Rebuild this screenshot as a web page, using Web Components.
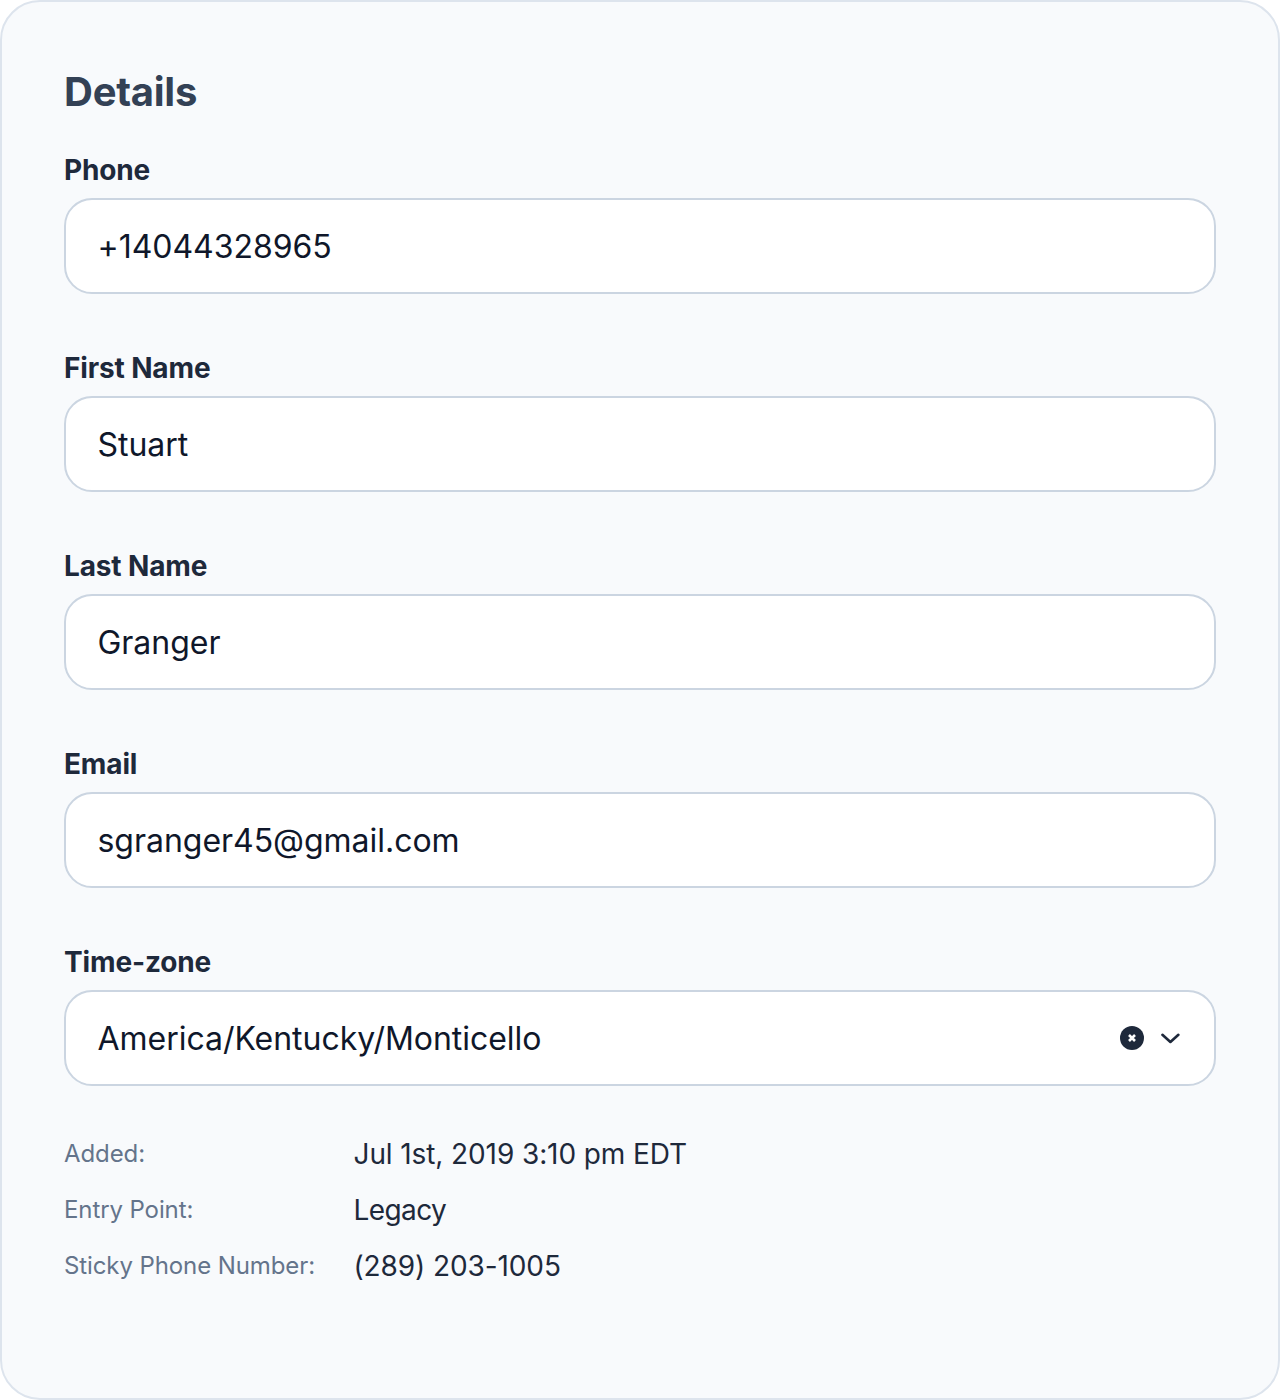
<!DOCTYPE html>
<html lang="en"><head><meta charset="utf-8"><title>Details</title>
<style>html,body{margin:0;background:#fff}body{font-family:Inter,"Liberation Sans",sans-serif}</style></head>
<body>
<details-card heading="Details">
<text-field label="Phone">+14044328965</text-field>
<text-field label="First Name">Stuart</text-field>
<text-field label="Last Name">Granger</text-field>
<text-field label="Email">sgranger45@gmail.com</text-field>
<text-field label="Time-zone">America/Kentucky/Monticello<select-controls slot="controls"></select-controls></text-field>
<meta-list slot="meta">
<meta-row label="Added:">Jul 1st, 2019 3:10 pm EDT</meta-row>
<meta-row label="Entry Point:" style="letter-spacing:-.6px">Legacy</meta-row>
<meta-row label="Sticky Phone Number:">(289) 203-1005</meta-row>
</meta-list>
</details-card>
<script>
const define=(name,html,attr)=>customElements.define(name,class extends HTMLElement{
connectedCallback(){
if(this.shadowRoot)return;
const root=this.attachShadow({mode:"open"});
root.innerHTML=html;
if(attr)root.querySelector(".label").textContent=this.getAttribute(attr);
}});
define("details-card",`<style>
:host{display:block;box-sizing:border-box;height:1400px;padding:62px;border:2px solid #dde4ed;border-radius:40px;background:#f8fafc}
h2{margin:0 0 38px;padding-top:8px;font-size:40px;line-height:40px;font-weight:700;letter-spacing:-.25px;color:#334155}
.fields{display:flex;flex-direction:column;gap:54px}
.meta{margin-top:48px}
</style><h2 class="label"></h2><div class="fields"><slot></slot></div><div class="meta"><slot name="meta"></slot></div>`,"heading");
define("text-field",`<style>
:host{display:block}
.label{font-size:28px;line-height:40px;height:40px;font-weight:700;letter-spacing:-.14px;color:#1e293b;margin-bottom:8px}
.box{box-sizing:border-box;height:96px;display:flex;align-items:center;justify-content:space-between;padding:0 32px 0 31.5px;border:2px solid #cbd5e1;border-radius:28px;background:#fff;font-size:32px;line-height:48px;letter-spacing:-.03px;color:#0f172a}
.value{padding-top:2px}
</style><div class="label"></div><div class="box"><span class="value"><slot></slot></span><slot name="controls"></slot></div>`,"label");
define("select-controls",`<style>
:host{display:flex;align-items:center;gap:14px}svg{display:block}
</style><svg width="24" height="24" viewBox="0 0 24 24"><circle cx="12" cy="12" r="12" fill="#1e293b"/><path d="M9 9l6 6M15 9l-6 6" stroke="#fff" stroke-width="2.6"/></svg><svg width="24" height="24" viewBox="0 0 24 24"><path d="M4.4 8.8l8 7.2 8-7.2" fill="none" stroke="#1e293b" stroke-width="2.6" stroke-linecap="round" stroke-linejoin="round"/></svg>`);
define("meta-list",`<style>:host{display:flex;flex-direction:column;gap:16px}</style><slot></slot>`);
define("meta-row",`<style>
:host{display:grid;grid-template-columns:289.5px 1fr;align-items:center;height:40px;font-size:28px;line-height:40px;letter-spacing:-.1px;color:#1e293b}
.label{font-size:24px;letter-spacing:-.1px;color:#64748b}
</style><span class="label"></span><span><slot></slot></span>`,"label");
</script></body></html>
